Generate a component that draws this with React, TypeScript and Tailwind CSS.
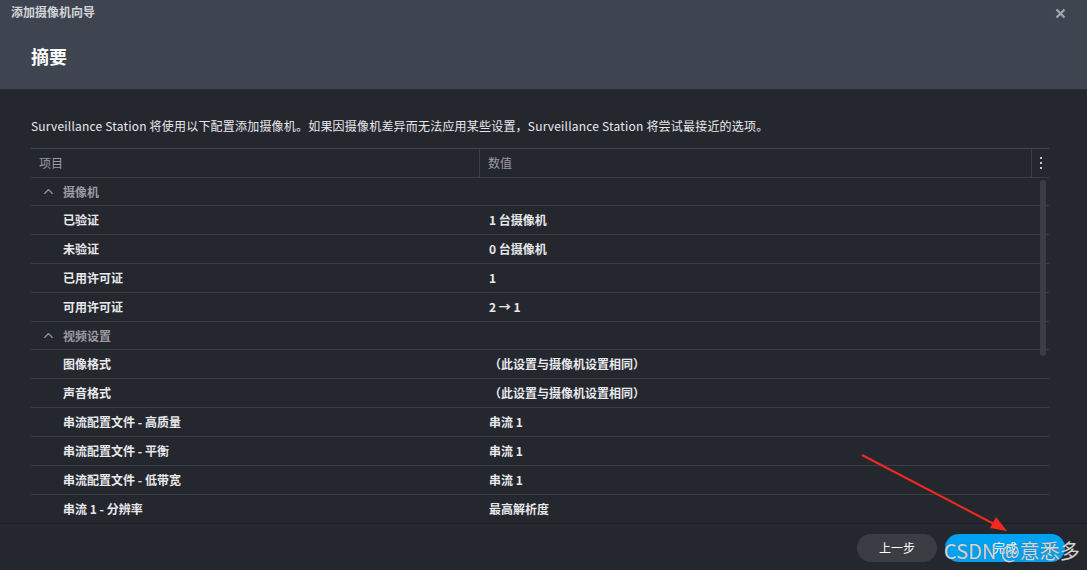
import { ChevronUp } from "lucide-react";

type Row = { label: string; value?: string; group?: boolean };

const rows: Row[] = [
    { label: "摄像机", group: true },
    { label: "已验证", value: "1 台摄像机" },
    { label: "未验证", value: "0 台摄像机" },
    { label: "已用许可证", value: "1" },
    { label: "可用许可证", value: "2 → 1" },
    { label: "视频设置", group: true },
    { label: "图像格式", value: "（此设置与摄像机设置相同）" },
    { label: "声音格式", value: "（此设置与摄像机设置相同）" },
    { label: "串流配置文件 - 高质量", value: "串流 1" },
    { label: "串流配置文件 - 平衡", value: "串流 1" },
    { label: "串流配置文件 - 低带宽", value: "串流 1" },
    { label: "串流 1 - 分辨率", value: "最高解析度" },
];

function TableRow({ row }: { row: Row }) {
    if (row.group) {
        return (
            <div className="flex h-[28px] items-center border-b border-[#3a3d44] pl-[10px] text-[#9a9ca2]">
                <ChevronUp size={15} strokeWidth={2.2} className="text-[#9a9ca2]" />
                <span className="ml-[7px] font-bold">{row.label}</span>
            </div>
        );
    }
    return (
        <div className="grid h-[29px] grid-cols-[449px_1fr] items-center border-b border-[#3a3d44] text-[#e8e9eb]">
            <span className="pl-[32px] font-bold">{row.label}</span>
            <span className="pl-[9px] font-bold">{row.value}</span>
        </div>
    );
}

export default function App() {
    return (
        <div className="relative flex h-[570px] w-[1087px] flex-col overflow-hidden bg-[#25272f] font-['Noto_Sans_CJK_SC','Noto_Sans',sans-serif] text-[12px]">
            <header className="h-[90px] shrink-0 border-b border-[#2a2d34] bg-[#3f4550]">
                <div className="flex items-center justify-between pl-[11px] pr-[21px] pt-[3px]">
                    <span className="text-[12px] font-bold text-[#d2d4d8]">添加摄像机向导</span>
                    <svg width="11" height="11" viewBox="0 0 11 11" className="mt-[2px]">
                        <path d="M1.5 1.5 L9.5 9.5 M9.5 1.5 L1.5 9.5" stroke="#a3a7ae" strokeWidth="2.2" />
                    </svg>
                </div>
                <h1 className="mt-[22px] pl-[31px] text-[18px] font-bold text-white">摘要</h1>
            </header>

            <main className="flex-1 overflow-hidden pl-[31px] pr-[38px]">
                <p className="mt-[27px] text-[12px] leading-[18px] tracking-[0.2px] text-[#e8e9eb]">
                    Surveillance Station 将使用以下配置添加摄像机。如果因摄像机差异而无法应用某些设置，Surveillance Station 将尝试最接近的选项。
                </p>

                <div className="mt-[13px] border-t border-[#44474e]">
                    <div className="grid h-[29px] grid-cols-[449px_1fr_17px] border-b border-[#3a3d44] text-[#9a9ca2]">
                        <span className="flex items-center border-r border-[#3a3d44] pl-[8px]">项目</span>
                        <span className="flex items-center border-r border-[#3a3d44] pl-[8px]">数值</span>
                        <span className="flex flex-col items-center justify-center gap-[3px] pl-[1px]">
                            <span className="h-[2px] w-[2px] bg-[#c8cacf]" />
                            <span className="h-[2px] w-[2px] bg-[#c8cacf]" />
                            <span className="h-[2px] w-[2px] bg-[#c8cacf]" />
                        </span>
                    </div>
                    <div className="relative">
                        {rows.map((row, i) => (
                            <TableRow key={i} row={row} />
                        ))}
                        <div className="absolute right-[3px] top-[2px] h-[176px] w-[6px] rounded-full bg-[#3a3d45]" />
                    </div>
                </div>
            </main>

            <footer className="flex h-[47px] shrink-0 items-center justify-end gap-[8px] border-t border-[#1c1e24] pr-[22px] pt-[1px]">
                <button className="h-[28px] w-[80px] rounded-full bg-[#3a3d44] text-[12px] text-white">上一步</button>
                <button className="h-[28px] w-[120px] rounded-full bg-[#00a1f1] text-[12px] text-white">完成</button>
            </footer>

            <svg className="pointer-events-none absolute left-0 top-0" width="1087" height="570">
                <line x1="862" y1="455" x2="996" y2="525" stroke="#f02a1e" strokeWidth="2" />
                <polygon points="1007,531 990,528 996,517" fill="#f02a1e" />
            </svg>
            <span className="pointer-events-none absolute left-[944px] top-[537px] text-[20px] leading-[28px] text-white/75 [text-shadow:0_0_1px_#555]">
                CSDN @意悉多
            </span>
        </div>
    );
}
